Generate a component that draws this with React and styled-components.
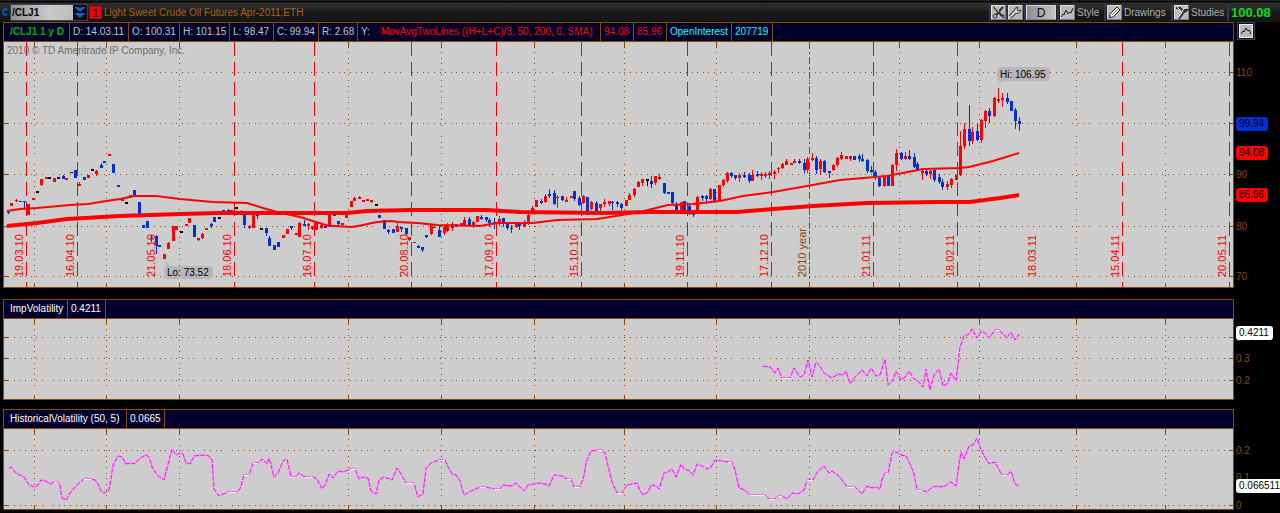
import React from "react";
import styled, { createGlobalStyle } from "styled-components";

const Global = createGlobalStyle`
  * { box-sizing: border-box; }
  html, body { margin: 0; background: #000; }
  body { font-family: "Liberation Sans", Arial, sans-serif; font-size: 10px; color: #fff; }
  button, input { font: inherit; margin: 0; }
`;

const BROWN = "#8a4b08";
const RED = "#ff0000";
const BLUE = "#0030d8";

const Page = styled.main`
  display: flex;
  flex-direction: column;
  width: 100%;
  overflow: hidden;
  padding-bottom: 3px;
`;

const Toolbar = styled.header`
  display: flex;
  align-items: center;
  height: 22px;
  padding: 2px 0 0 2px;
  background:
    repeating-linear-gradient(90deg, #3a3a3a 0 1px, #000 1px 2px) top / 100% 1px no-repeat,
    linear-gradient(#000 0 2px, #303030 3px, #262626 10px, #191919 11px, #161616 21px);
`;

const SymbolBox = styled.div`
  display: flex;
  width: 78px;
  height: 17px;
  margin: 0 0 0 2px;
  border: 1px solid #34465a;
`;

const SymbolInput = styled.input`
  flex: 1;
  min-width: 0;
  height: 15px;
  padding: 0 0 0 1px;
  border: 0;
  border-radius: 0;
  outline: 0;
  background: linear-gradient(90deg, #909090, #c8c8c8 60%, #bdbdbd);
  color: #000;
  font-weight: bold;
`;

const DropButton = styled.button`
  display: flex;
  width: 14px;
  height: 15px;
  padding: 0;
  border: 0;
  background: #06090f;
`;

const Badge = styled.span`
  width: 13px;
  height: 13px;
  margin: 0 2px 0 1px;
  background: #f50000;
  border: 1px solid #c00000;
  color: #000;
  font-size: 11px;
  line-height: 12px;
  text-align: center;
`;

const Title = styled.h1`
  flex: 1;
  margin: 0;
  color: #a8660f;
  font-size: 10px;
  font-weight: normal;
  white-space: nowrap;
`;

const Tools = styled.div`
  display: flex;
  height: 17px;
  margin-right: 2px;
`;

const ToolButton = styled.button`
  display: flex;
  align-items: center;
  gap: 2px;
  width: ${(p) => p.$w}px;
  height: 17px;
  padding: 0 0 0 ${(p) => p.$pad || 0}px;
  border: 0;
  border-left: 2px solid #2b3b4b;
  background: transparent;
  color: #b0b0b0;
  line-height: 15px;

  svg { flex: none; }
`;

const PeriodFace = styled.span`
  flex: 1;
  height: 15px;
  margin-right: 1px;
  border: 1px solid #d8d8d8;
  border-bottom-color: #888;
  background: linear-gradient(90deg, #8e8e8e, #c4c4c4);
  color: #111;
  font-size: 12px;
  line-height: 14px;
  text-align: center;
`;

const LastPrice = styled.output`
  width: 49px;
  color: #00e010;
  font-size: 13px;
  font-weight: bold;
`;

const Panel = styled.section`
  display: flex;
  margin-top: ${(p) => p.$gap}px;
  padding-left: 3px;
`;

const Frame = styled.div`
  flex: 1;
  min-width: 0;
  border: 1px solid ${BROWN};
`;

const Header = styled.div`
  display: flex;
  height: 19px;
  background: #00002b;
  border-bottom: 1px solid ${BROWN};
`;

const Cell = styled.div`
  flex: 0 0 ${(p) => p.$w}px;
  padding-left: ${(p) => (p.$first ? 6 : 3)}px;
  border-right: 1px solid ${BROWN};
  color: ${(p) => p.$color || "#c4c4c4"};
  font-weight: ${(p) => (p.$bold ? "bold" : "normal")};
  line-height: 18px;
  white-space: nowrap;
`;

const Study = styled.span`
  margin-left: 11px;
  color: #ff0000;
`;

const Plot = styled.svg`
  display: block;
  width: 100%;
  height: auto;
  background: #cdcdcd;
`;

const Axis = styled.div`
  display: flex;
  flex-direction: column;
  width: 46px;
  padding-bottom: 1px;
`;

const AxisHead = styled.div`
  height: 20px;
  padding-left: 3px;
`;

const Scale = styled.div`
  position: relative;
  flex: 1;
`;

const Mark = styled.span`
  position: absolute;
  left: 2px;
  transform: translateY(-50%);
  color: ${BROWN};
  line-height: 14px;
`;

const Tag = styled(Mark)`
  height: 14px;
  padding: 0 4px 0 3px;
  border-radius: 3px;
  background: ${(p) => p.$bg};
  color: #000;
`;

const ScaleButton = styled.button`
  display: flex;
  align-items: center;
  justify-content: center;
  width: 18px;
  height: 18px;
  padding: 0;
  border: 1px solid #34465a;
  background: #0a0a0a;
`;

/* Colour letter, then x, high, low, body top, body bottom */
const CANDLES = `b8,211,214,212,213 r11,203,206,203,206 r16,199,202,200,201 b20,201,202,201,202 b24,201,208,201,202
r28,204,215,204,215 r33,198,200,198,200 k37,191,193,191,193 r41,179,186,179,185 r46,177,179,177,179 k49,177,179,177,179
r54,178,182,178,182 k58,177,179,177,179 b63,175,179,176,179 r66,178,180,178,180 k71,172,173,172,173 b75,170,178,170,178
r79,182,186,184,186 b84,177,180,177,180 r88,175,178,175,178 k92,169,171,169,171 r96,170,176,171,174 b101,163,168,165,168
b104,161,163,161,163 r109,154,156,154,156 b113,164,173,164,173 b118,185,187,185,187 r122,199,201,199,201 k126,202,204,202,204
r130,195,198,195,198 b134,190,195,190,195 b139,202,214,202,214 b143,225,228,225,228 b147,221,228,221,228 b151,235,242,237,238
b156,235,254,236,246 b159,245,247,245,247 r164,254,259,254,259 r168,242,249,243,249 r173,226,241,226,241 r176,226,230,226,230
k181,231,233,231,233 r186,224,226,224,226 r189,218,223,218,223 b194,225,237,225,237 r198,238,241,238,240 r202,233,239,234,238
r206,228,230,228,230 b211,223,228,224,226 b214,217,222,217,222 k219,217,219,217,219 b223,210,212,210,212 b228,209,212,210,212
r231,210,213,210,213 k236,207,209,207,209 r241,210,213,211,213 b244,215,228,215,225 r249,225,229,226,228 r253,214,228,214,228
b257,215,219,215,216 k261,228,230,228,230 b266,228,236,228,233 b269,236,246,238,246 b274,245,250,245,250 b278,242,247,242,247
r283,235,238,235,238 r287,229,234,229,234 b291,226,230,226,228 r296,233,235,233,235 r299,222,237,223,237 b304,220,226,224,226
r308,223,230,224,226 r312,226,230,226,229 r316,222,230,222,230 r321,224,229,225,228 b325,226,228,226,228 r329,214,226,214,226
b334,215,216,215,216 b338,221,225,221,224 r342,223,225,223,225 r346,214,218,214,218 r351,201,207,201,207 r354,197,201,198,201
r359,196,199,197,199 r363,200,202,200,202 r367,199,201,199,201 r371,200,203,200,202 k376,204,206,204,206 b379,215,218,215,218
b384,220,229,220,229 b388,229,234,230,232 b393,229,233,229,233 r397,223,232,226,232 b401,227,232,227,229 b406,228,235,228,234
r409,237,241,237,240 r414,242,243,242,243 b418,245,248,246,248 b422,247,252,247,250 b426,235,238,235,237 r431,225,235,225,234
b434,227,228,227,228 b439,226,237,230,237 r444,226,235,227,233 r447,223,232,225,231 r452,222,231,224,228 b456,224,227,224,227
r461,223,226,223,226 r464,217,226,220,225 b469,217,226,219,225 r473,221,228,222,226 r477,216,222,216,222 b481,215,220,217,219
b486,217,222,217,220 b489,218,227,220,223 b494,218,229,222,224 r499,216,226,219,224 b503,218,227,218,223 b507,222,230,223,228
b511,225,233,228,229 r516,223,228,223,227 b519,222,230,222,226 r524,220,227,222,227 r528,212,225,215,224 r532,206,214,208,212
r536,200,207,200,207 b541,199,204,201,203 r545,194,203,196,202 b549,189,198,194,196 b554,190,205,193,204 r557,195,208,197,198
b562,196,201,196,200 r566,197,202,200,202 r571,196,198,196,198 b574,191,201,191,199 b579,196,206,198,205 r583,195,204,196,203
b587,197,215,197,215 r591,201,210,202,209 b596,201,212,203,211 r600,204,211,204,208 r604,199,207,202,204 r609,201,206,201,204
b612,201,210,202,203 b617,201,207,202,204 b621,203,210,204,208 r626,200,206,200,206 r629,193,200,195,200 r634,188,197,189,195
r638,181,187,182,187 r642,179,186,179,183 k647,179,186,179,181 b651,176,188,181,184 r655,176,185,176,183 r659,174,180,177,179
b664,183,194,183,193 b668,192,194,192,194 b672,192,205,192,203 b676,202,214,204,210 r681,202,210,202,210 b684,201,210,201,210
b689,203,215,206,213 b693,210,217,213,215 r697,196,210,197,210 b702,195,201,196,198 b706,195,204,196,199 r710,188,200,189,199
b714,189,201,189,201 r719,185,201,185,201 r723,179,187,180,185 r727,172,183,173,181 b731,172,178,173,176 b735,175,180,175,178
r739,173,182,175,178 b744,172,178,175,177 b749,173,183,175,181 r752,170,181,175,181 b757,171,177,174,176 r761,172,180,174,176
r765,172,178,174,176 r769,171,179,173,175 r774,170,179,172,174 r778,167,173,168,169 r782,163,169,164,168 r786,159,165,161,165
r791,163,165,163,165 r794,159,163,161,163 b799,159,164,161,163 b804,159,173,163,170 r807,157,173,159,170 r812,153,161,158,160
b816,156,174,158,170 r820,159,175,161,169 b824,160,173,161,172 b829,171,178,171,173 r833,164,171,165,170 r837,157,167,158,165
r841,152,160,155,159 r846,156,159,156,159 r850,156,161,156,159 b854,156,160,156,160 b859,154,162,156,159 b862,154,162,159,161
b867,159,173,160,171 b871,166,173,170,172 b875,170,180,172,178 b879,177,187,178,186 r884,175,187,176,186 b888,176,186,176,186
r892,164,186,165,186 r896,149,171,153,165 b901,152,160,153,159 r905,152,160,156,159 b909,150,160,156,159 b914,153,168,157,167
b917,162,171,164,170 r922,168,180,171,173 b926,168,176,171,174 r930,170,179,171,174 b934,170,182,170,180 b939,174,184,177,182
b942,179,190,182,187 r947,181,190,184,187 r951,178,188,179,185 r956,175,180,175,180 r960,131,176,146,175 r964,123,149,129,146
b969,105,146,129,141 r972,127,144,132,141 b977,123,141,131,140 r981,119,143,120,140 r985,110,128,111,121 b989,108,123,111,116
r994,97,117,98,116 r998,88,103,99,101 r1002,93,107,98,100 b1007,93,104,98,102 b1011,101,111,101,111 b1015,108,129,110,121
b1019,117,131,121,124`
  .split(/\s+/)
  .map((c) => [c[0], ...c.slice(1).split(",").map(Number)]);

const MA_FAST =
  "7,211 20,209 37,208 70,205 88,204 100,202 120,199 134,196 156,196 180,199 213,202 247,203 263,208 277,212 300,217 329,226 335,226 352,227 363,225 377,222 392,221 397,222 417,223 437,225 480,226 497,223 533,223 557,220 597,219 610,217 640,212 668,205 693,204 720,201 743,196 773,192 807,186 840,180 887,176 923,169 960,168 969,167 993,161 1019,153";
const MA_SLOW =
  "7,226 37,223 67,219 120,216 180,214 220,213 347,213 367,211 410,210 487,210 520,212 603,213 650,212 737,212 773,209 813,206 867,203 940,202 970,202 1000,198 1019,195";
const IMPLIED =
  "762,366 770,367 775,373 778,368 782,378 790,378 794,368 800,377 804,375 808,360 812,377 816,362 820,366 824,373 832,378 838,374 843,375 846,371 850,384 855,377 862,370 867,376 871,368 876,376 880,375 885,359 888,385 893,380 896,371 901,380 905,377 909,371 914,379 918,381 923,387 926,369 930,390 934,375 939,369 943,386 947,384 951,373 956,381 960,347 964,336 969,334 972,329 977,338 981,331 985,333 989,338 995,330 999,330 1003,334 1007,338 1011,332 1015,340 1019,334";
const HISTORICAL =
  "8,469 11,467 16,473 24,477 29,485 34,487 38,485 41,480 46,481 50,484 54,482 58,482 60,486 62,498 66,500 70,493 77,485 84,479 91,479 95,480 98,484 101,491 104,493 109,490 111,478 113,465 118,456 122,457 126,464 130,463 134,464 140,458 146,455 149,457 152,467 157,475 164,480 168,464 172,449 176,455 180,453 183,454 186,463 190,464 194,456 204,455 209,456 212,460 214,489 219,496 228,492 236,492 240,489 244,475 249,475 253,463 258,463 262,459 267,464 269,458 272,469 274,477 278,473 283,461 287,459 291,477 295,477 299,473 305,477 313,477 317,479 322,489 325,485 329,474 333,478 338,471 343,472 350,469 355,469 359,479 363,477 368,478 371,491 376,494 379,480 384,477 392,480 397,468 401,474 406,483 414,483 418,497 423,494 426,468 431,463 439,460 445,460 448,467 452,474 456,475 460,481 464,495 469,492 480,487 486,487 494,489 500,489 503,485 511,486 516,483 524,491 528,485 539,483 545,484 549,486 554,475 562,476 567,479 571,479 574,487 580,487 584,476 586,462 591,451 598,450 602,450 605,453 608,466 612,482 617,493 622,493 627,485 637,483 640,491 643,495 648,492 651,485 656,486 659,489 664,473 668,472 672,469 676,477 681,464 684,469 690,471 693,475 697,464 702,466 707,469 711,467 715,460 722,461 728,462 732,462 735,470 739,488 745,490 750,495 765,495 769,499 775,499 778,496 782,496 787,499 792,493 798,494 804,490 807,480 813,480 818,471 824,466 829,473 832,471 840,477 847,487 855,487 862,494 867,486 872,488 876,487 880,489 882,479 885,473 888,473 892,453 897,452 901,455 906,456 911,466 914,474 917,490 922,490 927,492 931,488 936,486 940,487 945,486 951,482 956,486 959,464 961,452 964,459 969,446 973,445 977,438 981,450 985,457 989,464 995,462 1002,475 1007,475 1011,471 1015,484 1019,486";

const MONTHS = [34, 106, 179, 348, 441, 534, 624, 716, 809, 899, 979, 1076, 1165];
const EXPIRIES = [26, 77, 234, 314, 411, 496, 581, 687, 771, 873, 957, 1122, 1229];
const EXPIRY_LABELS = [
  [23, "19.03.10"], [74, "16.04.10"], [155, "21.05.10"], [231, "18.06.10"], [311, "16.07.10"],
  [408, "20.08.10"], [493, "17.09.10"], [578, "15.10.10"], [684, "19.11.10"], [768, "17.12.10"],
  [870, "21.01.11"], [954, "18.02.11"], [1036, "18.03.11"], [1119, "15.04.11"], [1226, "20.05.11"],
];

const H_GAPS = [17, 48, 199, 227, 378, 406, 557, 585, 737, 765, 887, 916, 1065, 1094];
const V_GAPS = [131, 158, 204];
const STEPS = [6, 5, 6, 5, 6];

/* One-pixel dots along an axis, leaving out the ones next to a break in the rule */
function dots(from, to, gaps, at) {
  let d = "";
  for (let p = from, i = 0; p < to; p += STEPS[i++ % 5]) {
    if (!gaps.some((g) => Math.abs(g - p) < 3)) d += at(p);
  }
  return d;
}

function Grid({ top, bottom, levels, yearLine, dotEnd }) {
  return (
    <g fill={BROWN} shapeRendering="crispEdges">
      {MONTHS.map((x) => (
        <path
          key={x}
          d={
            `M${x} ${top}h1v6h-1zM${x} ${bottom - 4}h1v4h-1z` +
            dots(top + 10, dotEnd, top < 100 ? V_GAPS : [], (y) => `M${x} ${y}h1v1h-1z`)
          }
        />
      ))}
      {levels.map((y) => (
        <path
          key={y}
          d={`M4 ${y}h5v1h-5zM1229 ${y}h4v1h-4z` + dots(14, 1227, H_GAPS, (x) => `M${x} ${y}h1v1h-1z`)}
        />
      ))}
      {yearLine && (
        <path d={`M809.5 ${top}V${bottom}`} stroke={BROWN} strokeDasharray="7 3 2 3" fill="none" />
      )}
    </g>
  );
}

const Vol = ({ points }) => {
  const pts = points.split(" ").map((p) => p.split(",").map(Number));
  const flat = pts
    .slice(1)
    .map(([x, y], i) => (y === pts[i][1] ? `M${pts[i][0]} ${y}.5H${x}` : ""))
    .join("");
  return (
    <g fill="none">
      <polyline points={points} stroke="#ff8cff" strokeWidth="2" opacity="0.6" />
      <polyline points={points} stroke="#ff10ff" />
      <polyline points={points} stroke="#ffffff" strokeDasharray="1 5" />
      <path d={flat} stroke="#ffffff" shapeRendering="crispEdges" />
    </g>
  );
};

const Candles = () => (
  <g shapeRendering="crispEdges">
    {CANDLES.map(([c, x, hi, lo, t, b]) => (
      <path
        key={x}
        fill={c === "r" ? RED : c === "b" ? BLUE : "#000"}
        d={`M${x} ${hi}h1V${lo}h-1zM${x - 1} ${t}h3V${b}h-3z`}
      />
    ))}
  </g>
);

const Face = ({ children }) => (
  <svg width="15" height="15" viewBox="0 0 15 15" aria-hidden="true">
    <rect width="15" height="15" fill="#b9b9b9" />
    <path d="M0 14.5H14.5V0" stroke="#7c7c7c" fill="none" />
    <path d="M0.500 14V0.500H14" stroke="#e0e0e0" fill="none" />
    {children}
  </svg>
);

const Level = ({ y, top, height, children }) => (
  <Mark style={{ top: `${((y + 1 - top) / height) * 100}%` }}>{children}</Mark>
);
const PriceTag = ({ y, top, height, bg, children }) => (
  <Tag $bg={bg} style={{ top: `${((y - top) / height) * 100}%` }}>{children}</Tag>
);

export default function App() {
  const price = { top: 42, height: 245 };
  const imp = { top: 319, height: 80 };
  const hist = { top: 429, height: 80 };
  return (
    <Page>
      <Global />
      <Toolbar>
        <svg width="6" height="8" viewBox="0 0 6 8" aria-hidden="true">
          <path d="M5 2C3 0 1 1.500 1 4S3 8 5 6" stroke="#0a58b8" strokeWidth="2" fill="none" />
        </svg>
        <SymbolBox>
          <SymbolInput aria-label="Symbol" defaultValue="/CLJ1" />
          <DropButton aria-label="Choose symbol">
            <svg width="14" height="15" viewBox="0 0 14 15">
              <path d="M2 2h3l2 1 2-1h3v1L7 7 2 3zM1 8h12L7 13z" fill="#1560c0" />
            </svg>
          </DropButton>
        </SymbolBox>
        <Badge>1</Badge>
        <Title>Light Sweet Crude Oil Futures Apr-2011,ETH</Title>
        <Tools>
          <ToolButton $w={17} aria-label="Cut">
            <Face>
              <path d="M3 2l8 9M12 2L5 10" stroke="#333" strokeWidth="2" fill="none" />
              <circle cx="4" cy="11" r="2" fill="none" stroke="#333" />
              <path d="M10 10l3 0 0 3-2-1z" fill="none" stroke="#222" />
              <path d="M4 2l4 5" stroke="#eee" />
            </Face>
          </ToolButton>
          <ToolButton $w={18} aria-label="Settings">
            <Face>
              <path d="M2 12l6-6" stroke="#333" strokeWidth="4" />
              <path d="M10 2C7 2 6 5 7 7s5 2 6-2l-3 1-1-2z" fill="#ddd" stroke="#333" />
              <path d="M2 12l6-6" stroke="#ddd" strokeWidth="2" />
            </Face>
          </ToolButton>
          <ToolButton $w={33} aria-label="Daily period"><PeriodFace>D</PeriodFace></ToolButton>
          <ToolButton $w={47} $pad={1}>
            <Face>
              <path d="M1 12l2-3 1 1 2-5 2 4 2-2 1 1 2-5" stroke="#222" fill="none" />
            </Face>
            Style
          </ToolButton>
          <ToolButton $w={67} $pad={1}>
            <Face>
              <path d="M2 13l1-4 7-7 3 3-7 7z" fill="#f2f2f2" stroke="#222" />
              <path d="M5 10l6-6M2 13l2-1-1-1z" stroke="#777" />
            </Face>
            Drawings
          </ToolButton>
          <ToolButton $w={56} $pad={1}>
            <Face>
              <path d="M2 3h4l2 2h5l-4 3-4 6" stroke="#2a2a2a" strokeWidth="2" fill="none" />
              <path d="M3 2l4 4M12 2L8 6M8 7l-4 6" stroke="#eee" />
            </Face>
            Studies
          </ToolButton>
          <ToolButton as="span" $w={2} />
        </Tools>
        <LastPrice>100.08</LastPrice>
      </Toolbar>

      <Panel $gap={0}>
        <Frame>
          <Header>
            <Cell $w={66} $first $bold $color="#00b400">/CLJ1 1 y D</Cell>
            <Cell $w={59}>D: 14.03.11</Cell>
            <Cell $w={51}>O: 100.31</Cell>
            <Cell $w={50}>H: 101.15</Cell>
            <Cell $w={44}>L: 98.47</Cell>
            <Cell $w={45}>C: 99.94</Cell>
            <Cell $w={39}>R: 2.68</Cell>
            <Cell $w={243}>Y:<Study>MovAvgTwoLines ((H+L+C)/3, 50, 200, 0, SMA)</Study></Cell>
            <Cell $w={33} $color="#ff0000">94.08</Cell>
            <Cell $w={33} $color="#ff0000">85.96</Cell>
            <Cell $w={65} $color="#00ffff">OpenInterest</Cell>
            <Cell $w={41} $color="#00ffff">207719</Cell>
          </Header>
          <Plot viewBox="4 42 1229 245" role="img" aria-label="Crude oil futures, daily price">
            <Grid top={42} bottom={287} dotEnd={282} levels={[72, 123, 174, 226, 276]} yearLine />
            <g stroke={RED} strokeDasharray="14 6" shapeRendering="crispEdges">
              {EXPIRIES.map((x) => <line key={x} x1={x + 0.5} x2={x + 0.5} y1="42" y2="287" />)}
            </g>
            <Candles />
            <polyline points={MA_FAST} fill="none" stroke={RED} strokeWidth="2" />
            <polyline points={MA_SLOW} fill="none" stroke={RED} strokeWidth="4" />
            <g fontSize="11" fill={RED}>
              {EXPIRY_LABELS.map(([x, t]) => (
                <text key={t} transform={`translate(${x} 277) rotate(-90)`}>{t}</text>
              ))}
              <text transform="translate(806 277) rotate(-90)" fill={BROWN}>2010 year</text>
            </g>
            <text x="7" y="54" fontSize="10" fill="#6e6e6e">2010 © TD Ameritrade IP Company, Inc.</text>
            <g fill="#b9b6b7" fontSize="10">
              <rect x="997" y="67" width="53" height="14" rx="4" />
              <path d="M998 86l2-6h4z" />
              <rect x="164" y="266" width="49" height="13" rx="4" />
              <path d="M165 260l2 7h4z" />
              <text x="1000" y="78" fill="#000">Hi: 106.95</text>
              <text x="167" y="276" fill="#000">Lo: 73.52</text>
            </g>
          </Plot>
        </Frame>
        <Axis>
          <AxisHead>
            <ScaleButton aria-label="Chart scale">
              <svg width="14" height="14" viewBox="0 0 14 14">
                <rect width="14" height="14" fill="#f0f0f0" />
                <rect x="1" y="1" width="12" height="12" fill="#b8b8b8" />
                <path d="M2 10l2-3 1 1 2-4 2 3 1-1 2 4" stroke="#111" fill="none" />
              </svg>
            </ScaleButton>
          </AxisHead>
          <Scale>
            <Level y={72} {...price}>110</Level>
            <Level y={174} {...price}>90</Level>
            <Level y={226} {...price}>80</Level>
            <Level y={276} {...price}>70</Level>
            <PriceTag y={124} bg={BLUE} {...price}>99.94</PriceTag>
            <PriceTag y={153} bg={RED} {...price}>94.08</PriceTag>
            <PriceTag y={195} bg={RED} {...price}>85.96</PriceTag>
          </Scale>
        </Axis>
      </Panel>

      <Panel $gap={11}>
        <Frame>
          <Header>
            <Cell $w={64} $first $color="#fff">ImpVolatility</Cell>
            <Cell $w={38} $color="#fff">0.4211</Cell>
          </Header>
          <Plot viewBox="4 319 1229 80" role="img" aria-label="Implied volatility">
            <Grid top={319} bottom={399} dotEnd={389} levels={[337, 358, 380]} />
            <Vol points={IMPLIED} />
          </Plot>
        </Frame>
        <Axis>
          <AxisHead />
          <Scale>
            <Level y={337} {...imp}>0.4</Level>
            <Level y={358} {...imp}>0.3</Level>
            <Level y={380} {...imp}>0.2</Level>
            <PriceTag y={333} bg="#fff" {...imp}>0.4211</PriceTag>
          </Scale>
        </Axis>
      </Panel>

      <Panel $gap={9}>
        <Frame>
          <Header>
            <Cell $w={123} $first $color="#fff">HistoricalVolatility (50, 5)</Cell>
            <Cell $w={38} $color="#fff">0.0665</Cell>
          </Header>
          <Plot viewBox="4 429 1229 80" role="img" aria-label="Historical volatility">
            <Grid top={429} bottom={509} dotEnd={499} levels={[450, 505]} />
            <Vol points={HISTORICAL} />
          </Plot>
        </Frame>
        <Axis>
          <AxisHead />
          <Scale>
            <Level y={450} {...hist}>0.2</Level>
            <Level y={477} {...hist}>0.1</Level>
            <Level y={505} {...hist}>0</Level>
            <PriceTag y={486} bg="#fff" {...hist}>0.066511</PriceTag>
          </Scale>
        </Axis>
      </Panel>
    </Page>
  );
}
